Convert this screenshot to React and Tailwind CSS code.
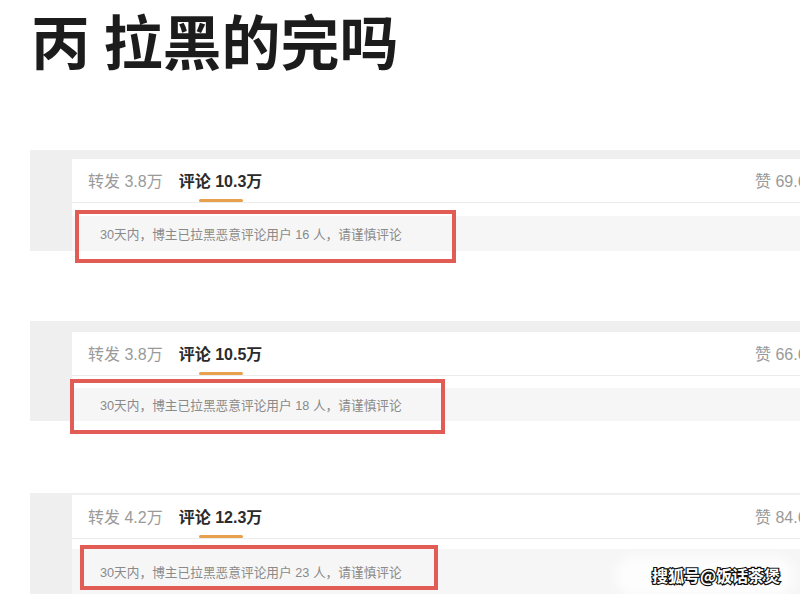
import React from "react";

const sections = [
  {
    repost: "3.8万",
    comment: "10.3万",
    like: "赞 69.6万",
    count: "16",
    pt: "pt-[9px]",
    gap: "h-[13px]",
    notice: "h-[35px]",
    box: "left-[75px] top-[60px] w-[381px] h-[53px]",
  },
  {
    repost: "3.8万",
    comment: "10.5万",
    like: "赞 66.6万",
    count: "18",
    pt: "pt-[11px]",
    gap: "h-[12px]",
    notice: "h-[33px]",
    box: "left-[70px] top-[58px] w-[375px] h-[55px]",
  },
  {
    repost: "4.2万",
    comment: "12.3万",
    like: "赞 84.6万",
    count: "23",
    pt: "pt-[2px]",
    gap: "h-[10px]",
    notice: "h-[45px]",
    box: "left-[80px] top-[52px] w-[358px] h-[45px]",
  },
];

function Section({ s }) {
  return (
    <div className="relative w-full">
      <div className={`ml-[30px] bg-[#efefef] pl-[42px] ${s.pt}`}>
        <div className="w-[803px] bg-white">
          <div className="flex h-[44px] items-center border-b border-[#ececec] pl-[16px] pt-[3px]">
            <div className="flex flex-1 items-center text-[16px]">
              <span className="text-[#9a9a9a]">转发 {s.repost}</span>
              <span className="relative ml-[16px] flex h-[41px] items-center font-bold text-[#2b2b2b]">
                评论 {s.comment}
                <span className="absolute bottom-[1px] left-1/2 h-[3px] w-[44px] -translate-x-1/2 rounded-full bg-[#e9a04c]" />
              </span>
            </div>
            <span className="w-[120px] shrink-0 text-[16px] text-[#9a9a9a]">{s.like}</span>
          </div>
          <div className={s.gap} />
          <div className={`flex items-center bg-[#f6f6f6] pl-[28px] pt-[4px] text-[12.7px] text-[#8a8a8a] ${s.notice}`}>
            30天内，博主已拉黑恶意评论用户 {s.count} 人，请谨慎评论
          </div>
        </div>
      </div>
      <div className={`absolute border-[4px] border-[#e05c55] ${s.box}`} />
    </div>
  );
}

export default function App() {
  return (
    <div className="relative h-[594px] w-[800px] overflow-hidden bg-white font-['Liberation_Sans','Noto_Sans_CJK_SC',sans-serif]">
      <h1 className="h-[150px] pl-[31px] pt-[4px] font-['Noto_Sans_CJK_SC',sans-serif] text-[59px] font-bold leading-[72px] text-[#1c1c1c]">
        丙 拉黑的完吗
      </h1>
      <Section s={sections[0]} />
      <div className="h-[70px]" />
      <Section s={sections[1]} />
      <div className="h-[72px]" />
      <Section s={sections[2]} />
      <div className="absolute left-[615px] top-[556px] h-[40px] w-[180px] rounded-full bg-white/80 blur-[6px]" />
      <div className="absolute left-[652px] top-[563px] font-['Noto_Sans_CJK_SC',sans-serif] text-[16px] font-bold leading-[24px] text-white [-webkit-text-stroke:2.4px_#111] [paint-order:stroke_fill]">
        搜狐号@饭话茶煲
      </div>
    </div>
  );
}
